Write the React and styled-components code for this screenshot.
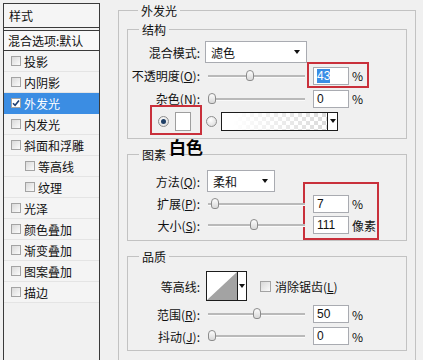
import React from "react";
import styled, { createGlobalStyle } from "styled-components";

const RED = "#c9303b";
const LINE = "#c2c2c2";

const GlobalStyle = createGlobalStyle`
	html, body {
		margin: 0;
		padding: 0;
		background: #f0f0f0;
	}
	body {
		font-family: "Noto Sans CJK SC", "Liberation Sans", sans-serif;
		font-size: 12px;
		color: #111;
	}
`;

const effects = [
	{ name: "投影" },
	{ name: "内阴影" },
	{ name: "外发光", active: true },
	{ name: "内发光" },
	{ name: "斜面和浮雕" },
	{ name: "等高线", sub: true },
	{ name: "纹理", sub: true },
	{ name: "光泽" },
	{ name: "颜色叠加" },
	{ name: "渐变叠加" },
	{ name: "图案叠加" },
	{ name: "描边" },
];

const CheckBox = ({ checked }) => (
	<Box $checked={checked}>
		{checked && (
			<svg width="8" height="8" viewBox="0 0 8 8">
				<path d="M1 4.2 L3.1 6.3 L7 1.5" fill="none" stroke="#1d3f73" strokeWidth="1.6" />
			</svg>
		)}
	</Box>
);

const Slider = ({ pos }) => (
	<Track>
		<Thumb $pos={pos} />
	</Track>
);

const Marked = ({ pad, ml = 0, children }) => (
	<MarkBox $pad={pad} $ml={ml}>
		{children}
	</MarkBox>
);

const App = () => {
	return (
		<>
			<GlobalStyle />
			<Page>
				<Sidebar>
					<SideTitle>样式</SideTitle>
					<BlendItem>混合选项:默认</BlendItem>
					{effects.map((fx) => (
						<EffectRow key={fx.name} $active={fx.active} $sub={fx.sub}>
							<CheckBox checked={fx.active} />
							{fx.name}
						</EffectRow>
					))}
				</Sidebar>

				<Main>
					<Group $pb={30}>
						<Legend>外发光</Legend>

						<SubGroup $mt={2} $pt={3} $pb={5}>
							<Legend>结构</Legend>
							<Row $h={22}>
								<Label>混合模式:</Label>
								<Select $w={102} $ml={5}>
									滤色
									<Caret />
								</Select>
							</Row>
							<Row $h={25}>
								<Label>
									不透明度(<u>O</u>):
								</Label>
								<Slider pos={43} />
								<Marked pad={[3, 4, 1, 4]} ml={8}>
									<Field>
										<Picked>43</Picked>
									</Field>
									<Unit>%</Unit>
								</Marked>
							</Row>
							<Row $h={21}>
								<Label>
									杂色(<u>N</u>):
								</Label>
								<Slider pos={0} />
								<Field $ml={8}>0</Field>
								<Unit>%</Unit>
							</Row>
							<Row $h={24}>
								<Marked pad={[5, 9, 2, 6]} ml={30}>
									<Radio $on />
									<Swatch />
								</Marked>
								<Radio $ml={15} />
								<GradientPick>
									<GradientFill />
									<GradientArrow>
										<Caret />
									</GradientArrow>
								</GradientPick>
							</Row>
						</SubGroup>

						<Note>白色</Note>

						<SubGroup $mt={0} $pt={6} $pb={4}>
							<Legend>图素</Legend>
							<Row $h={24}>
								<Label>
									方法(<u>Q</u>):
								</Label>
								<Select $w={68} $ml={7}>
									柔和
									<Caret />
								</Select>
							</Row>
							<Split>
								<Column>
									<Row $h={21}>
										<Label>
											扩展(<u>P</u>):
										</Label>
										<Slider pos={7} />
									</Row>
									<Row $h={22}>
										<Label>
											大小(<u>S</u>):
										</Label>
										<Slider pos={47} />
									</Row>
								</Column>
								<ValueBox>
									<Row $h={21}>
										<Field>7</Field>
										<Unit>%</Unit>
									</Row>
									<Row $h={22}>
										<Field>111</Field>
										<Unit>像素</Unit>
									</Row>
								</ValueBox>
							</Split>
						</SubGroup>

						<SubGroup $mt={7} $pt={5} $pb={4}>
							<Legend>品质</Legend>
							<Row $h={32}>
								<Label>等高线:</Label>
								<ContourPick>
									<svg width="30" height="28" viewBox="0 0 30 28">
										<polygon points="0,28 30,0 30,28" fill="#a3a3a3" />
									</svg>
									<ContourArrow>
										<Caret />
									</ContourArrow>
								</ContourPick>
								<Box $ml={13} $mr={4} $size={11} />
								消除锯齿(<u>L</u>)
							</Row>
							<Row $h={24}>
								<Label>
									范围(<u>R</u>):
								</Label>
								<Slider pos={50} />
								<Field $ml={8}>50</Field>
								<Unit>%</Unit>
							</Row>
							<Row $h={20}>
								<Label>
									抖动(<u>J</u>):
								</Label>
								<Slider pos={0} />
								<Field $ml={8}>0</Field>
								<Unit>%</Unit>
							</Row>
						</SubGroup>
					</Group>
				</Main>
			</Page>
		</>
	);
};

export default App;

const Page = styled.div`
	display: flex;
	width: 423px;
	height: 360px;
	overflow: hidden;
	padding-left: 3px;
	box-sizing: border-box;
`;

const Sidebar = styled.aside`
	flex: none;
	width: 97px;
	height: 380px;
	margin-top: 3px;
	box-sizing: border-box;
	border: 1px solid #3a3a3a;
	background: #f1f1f1;
	display: flex;
	flex-direction: column;
`;

const SideTitle = styled.div`
	height: 23px;
	line-height: 23px;
	padding-left: 5px;
	border-bottom: 1px solid #3a3a3a;
	background: #f5f5f5;
`;

const BlendItem = styled.div`
	margin-top: 2px;
	height: 19px;
	line-height: 19px;
	padding-left: 4px;
	border-top: 1px solid #3a3a3a;
	border-bottom: 1px solid #3a3a3a;
	background: #f8f8f8;
	white-space: nowrap;
`;

const EffectRow = styled.div`
	display: flex;
	align-items: center;
	height: 21px;
	box-sizing: border-box;
	padding-left: ${({ $sub }) => ($sub ? 21 : 7)}px;
	border-bottom: 1px solid ${({ $active }) => ($active ? "#3b8de3" : "#e4e4e4")};
	background: ${({ $active }) => ($active ? "#3b8de3" : "#f4f4f4")};
	color: ${({ $active }) => ($active ? "#fff" : "#111")};
	white-space: nowrap;
`;

const Box = styled.span`
	flex: none;
	display: inline-flex;
	align-items: center;
	justify-content: center;
	width: ${({ $size }) => $size || 10}px;
	height: ${({ $size }) => $size || 10}px;
	box-sizing: border-box;
	margin-left: ${({ $ml }) => $ml || 0}px;
	margin-right: ${({ $mr }) => $mr ?? 3}px;
	border: 1px solid #a3a3a3;
	background: ${({ $checked }) =>
		$checked ? "#fff" : "linear-gradient(135deg, #d9d9d9, #fbfbfb)"};
`;

const Main = styled.div`
	flex: none;
	width: 298px;
	margin: 2px 0 0 18px;
`;

const Group = styled.fieldset`
	margin: 0;
	min-width: 0;
	padding: 0 8px ${({ $pb }) => $pb}px;
	border: 1px solid ${LINE};
`;

const SubGroup = styled.fieldset`
	margin: ${({ $mt }) => $mt}px 0 0;
	min-width: 0;
	padding: ${({ $pt }) => $pt}px 0 ${({ $pb }) => $pb}px;
	border: 1px solid ${LINE};
`;

const Legend = styled.legend`
	margin-left: 11px;
	padding: 0 3px;
	line-height: 17px;
	font-size: 12px;
`;

const Note = styled.div`
	position: relative;
	z-index: 1;
	height: 16px;
	margin-bottom: -9px;
	padding-left: 42px;
	line-height: 16px;
	font-size: 17px;
	font-weight: 700;
	color: #000;
`;

const Row = styled.div`
	display: flex;
	align-items: center;
	height: ${({ $h }) => $h}px;
	white-space: nowrap;
`;

const Label = styled.span`
	flex: none;
	width: 72px;
	text-align: right;
`;

const Select = styled.div`
	flex: none;
	display: flex;
	align-items: center;
	justify-content: space-between;
	width: ${({ $w }) => $w}px;
	height: 22px;
	margin-left: ${({ $ml }) => $ml}px;
	padding: 0 6px 0 5px;
	box-sizing: border-box;
	border: 1px solid #a9abb1;
	background: #fff;
`;

const Caret = styled.span`
	width: 0;
	height: 0;
	border-left: 3px solid transparent;
	border-right: 3px solid transparent;
	border-top: 4px solid #111;
`;

const Track = styled.div`
	position: relative;
	flex: none;
	width: 97px;
	height: 12px;
	margin-left: 8px;

	&::before {
		content: "";
		position: absolute;
		left: 0;
		right: 0;
		top: 5px;
		height: 2px;
		background: #b9b9b9;
		border-bottom: 1px solid #fafafa;
	}
`;

const Thumb = styled.div`
	position: absolute;
	top: 0;
	left: ${({ $pos }) => $pos}%;
	width: 8px;
	height: 11px;
	margin-left: ${({ $pos }) => ($pos === 0 ? 0 : -4)}px;
	box-sizing: border-box;
	border: 1px solid #8c8c8c;
	border-radius: 4px 4px 3px 3px;
	background: linear-gradient(#fdfdfd, #d8d8d8);
`;

const Field = styled.div`
	flex: none;
	width: 36px;
	height: 18px;
	margin-left: ${({ $ml }) => $ml || 0}px;
	padding-left: 3px;
	box-sizing: border-box;
	border: 1px solid #a9abb1;
	background: #fff;
	line-height: 16px;
	font-family: "Liberation Sans", Arial, sans-serif;
	font-size: 12px;
`;

const Picked = styled.span`
	background: #3a8ee6;
	color: #fff;
`;

const Unit = styled.span`
	margin-left: 3px;
`;

const MarkBox = styled.span`
	display: inline-flex;
	align-items: center;
	border: 2px solid ${RED};
	padding: ${({ $pad }) => $pad.map((v) => `${v}px`).join(" ")};
	margin: ${({ $pad, $ml }) =>
		`${-$pad[0] - 2}px ${-$pad[1] - 2}px ${-$pad[2] - 2}px ${$ml - $pad[3] - 2}px`};
`;

const Radio = styled.span`
	flex: none;
	position: relative;
	width: 11px;
	height: 11px;
	margin-left: ${({ $ml }) => $ml || 0}px;
	box-sizing: border-box;
	border-radius: 50%;
	border: 1px solid #8e8e8e;
	background: radial-gradient(circle at 40% 35%, #ffffff, #d6d6d6);

	&::after {
		content: "";
		display: ${({ $on }) => ($on ? "block" : "none")};
		position: absolute;
		left: 2px;
		top: 2px;
		width: 5px;
		height: 5px;
		border-radius: 50%;
		background: #1f3f66;
	}
`;

const Swatch = styled.span`
	flex: none;
	width: 16px;
	height: 19px;
	margin-left: 6px;
	box-sizing: border-box;
	border: 1px solid #9e9e9e;
	background: #fff;
`;

const GradientPick = styled.div`
	flex: none;
	display: flex;
	width: 117px;
	height: 19px;
	margin-left: 4px;
	box-sizing: border-box;
	border: 1px solid #1c1c1c;
	background: #fff;
`;

const GradientFill = styled.div`
	flex: 1;
	background-image: linear-gradient(to right, #fff 10%, rgba(255, 255, 255, 0.15)),
		conic-gradient(#d4d4d4 25%, #fff 0 50%, #d4d4d4 0 75%, #fff 0);
	background-size: 100% 100%, 8px 8px;
`;

const GradientArrow = styled.div`
	display: flex;
	align-items: center;
	justify-content: center;
	width: 9px;
	border-left: 1px solid #1c1c1c;
`;

const Split = styled.div`
	display: flex;
	align-items: flex-start;
`;

const Column = styled.div`
	display: flex;
	flex-direction: column;
`;

const ValueBox = styled.div`
	flex: none;
	width: 76px;
	box-sizing: border-box;
	margin: -11px 0 -4px -2px;
	padding: 9px 0 2px 8px;
	border: 2px solid ${RED};
`;

const ContourPick = styled.div`
	flex: none;
	display: flex;
	width: 41px;
	height: 30px;
	margin-left: 6px;
	box-sizing: border-box;
	border: 1px solid #1c1c1c;
	background: #fff;

	svg {
		display: block;
	}
`;

const ContourArrow = styled.div`
	display: flex;
	align-items: center;
	justify-content: center;
	flex: 1;
	border-left: 1px solid #1c1c1c;
`;
